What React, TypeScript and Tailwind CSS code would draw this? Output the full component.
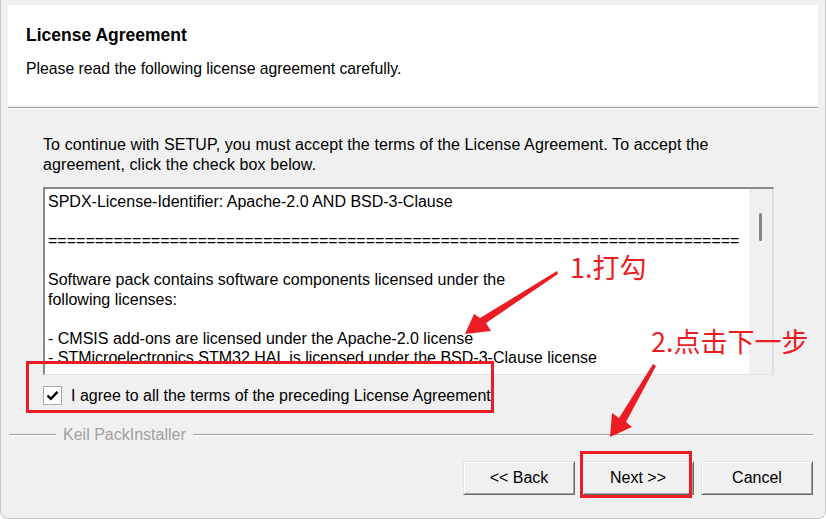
import React from "react";

const font = { fontFamily: '"Liberation Sans", Arial, sans-serif' };

function Btn({ label }: { label: string }) {
  return (
    <div className="w-[112px] h-[34px] flex items-center justify-center bg-[#f0f0f0] text-[16px] text-black border-t border-l border-t-[#e3e3e3] border-l-[#e3e3e3] border-b border-r border-b-[#696969] border-r-[#696969] shadow-[inset_1px_1px_0_#ffffff,inset_-1px_-1px_0_#a0a0a0]">
      {label}
    </div>
  );
}

export default function App() {
  const lines = [
    "SPDX-License-Identifier: Apache-2.0 AND BSD-3-Clause",
    "\u00a0",
    "==========================================================================",
    "\u00a0",
    "Software pack contains software components licensed under the",
    "following licenses:",
    "\u00a0",
    "- CMSIS add-ons are licensed under the Apache-2.0 license",
    "- STMicroelectronics STM32 HAL is licensed under the BSD-3-Clause license",
  ];
  return (
    <div className="w-[826px] h-[519px] bg-white relative overflow-hidden" style={font}>
      <div className="h-[519px] bg-[#f0f0f0] rounded-b-[8px] border-l border-r border-b border-[#c8c8c8] flex flex-col">
        {/* header */}
        <div className="mt-[5px] mx-[7px] h-[100px] bg-white pl-[18px] pt-[20px]">
          <div className="text-[17.5px] font-bold leading-[20px] text-black">License Agreement</div>
          <div className="mt-[14px] text-[15.75px] leading-[20px] text-black">
            Please read the following license agreement carefully.
          </div>
        </div>
        <div className="mt-[2px] mx-[7px] h-[2px] border-t border-t-[#a0a0a0] border-b border-b-white" />

        {/* body */}
        <div className="pl-[42px] pr-[52px] pt-[26px]">
          <div className="text-[16px] tracking-[0.1px] leading-[20px] text-black">
            To continue with SETUP, you must accept the terms of the License Agreement. To accept the
            <br />
            agreement, click the check box below.
          </div>
          <div className="mt-[12px] w-[731px] h-[188px] flex bg-white border-t-2 border-l-2 border-t-[#8a8a8a] border-l-[#8a8a8a] border-r border-b border-r-[#e3e3e3] border-b-[#e3e3e3] overflow-hidden">
            <div className="flex-1 pl-[3px] pt-[3px] text-[16px] leading-[19.5px] text-black whitespace-nowrap overflow-hidden">
              {lines.map((l, i) => (
                <div key={i}>{l}</div>
              ))}
            </div>
            <div className="w-[24px] bg-[#f0f0f0] border-r border-r-[#dcdcdc] relative">
              <div className="absolute left-[10px] top-[24px] w-[3px] h-[28px] rounded-full bg-[#858585]" />
            </div>
          </div>
          <div className="mt-[11px] flex items-center h-[19px]">
            <div className="w-[19px] h-[19px] bg-white border border-[#a8a8a8] flex items-center justify-center">
              <svg width="13" height="11" viewBox="0 0 13 11">
                <path d="M1.5 5.5 L4.8 8.8 L11.5 1.8" fill="none" stroke="#000" strokeWidth="2.4" />
              </svg>
            </div>
            <div className="ml-[9px] text-[16px] leading-[19px] text-black">
              I agree to all the terms of the preceding License Agreement
            </div>
          </div>
        </div>

        {/* group line */}
        <div className="mt-[21px] ml-[8px] mr-[12px] flex items-center">
          <div className="w-[47px] h-[2px] border-t border-t-[#a0a0a0] border-b border-b-white" />
          <div className="px-[7px] text-[16px] leading-[18px] text-[#a0a0a0]">Keil PackInstaller</div>
          <div className="flex-1 h-[2px] border-t border-t-[#a0a0a0] border-b border-b-white" />
        </div>

        {/* buttons */}
        <div className="mt-[17px] flex justify-end gap-[7px] pr-[12px]">
          <Btn label="<< Back" />
          <Btn label="Next >>" />
          <Btn label="Cancel" />
        </div>
      </div>

      {/* annotations */}
      <div className="absolute left-[26px] top-[361px] w-[468px] h-[52px] border-[3px] border-[#ec1c24]" />
      <div className="absolute left-[580px] top-[451px] w-[112px] h-[47px] border-[3px] border-[#ec1c24]" />
      <div
        className="absolute left-[570px] top-[250px] text-[27px] leading-[34px] text-[#ec1c24]"
        style={{ fontFamily: '"Noto Sans CJK SC", "Liberation Sans", sans-serif' }}
      >
        1.打勾
      </div>
      <div
        className="absolute left-[651px] top-[324px] text-[27px] leading-[34px] text-[#ec1c24]"
        style={{ fontFamily: '"Noto Sans CJK SC", "Liberation Sans", sans-serif' }}
      >
        2.点击下一步
      </div>
      <svg className="absolute left-0 top-0" width="826" height="519" viewBox="0 0 826 519">
        <polygon points="557,271 558,274 486,323 491,331 465,334 474,314 480,318" fill="#ec1c24" />
        <polygon points="653,364 656,366 626,422 632,427 610,437 612,413 619,418" fill="#ec1c24" />
      </svg>
    </div>
  );
}
